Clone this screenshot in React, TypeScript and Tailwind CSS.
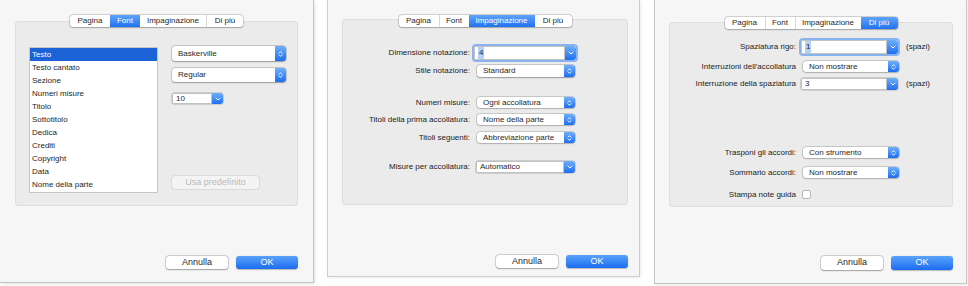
import React from "react";

const UpDown = () => (
  <svg width="5" height="8" viewBox="0 0 5 8">
    <path d="M1 3.2 L2.5 1.6 L4 3.2 M1 4.8 L2.5 6.4 L4 4.8" stroke="white" strokeWidth="0.9" fill="none" strokeLinecap="round" strokeLinejoin="round" />
  </svg>
);

const Down = () => (
  <svg width="6" height="4" viewBox="0 0 6 4">
    <path d="M1 1 L3 3 L5 1" stroke="white" strokeWidth="1" fill="none" strokeLinecap="round" strokeLinejoin="round" />
  </svg>
);

function Popup({ className, text }: { className: string; text: string }) {
  return (
    <div className={`flex items-stretch rounded-[3px] bg-white shadow-[0_0_0_0.5px_rgba(0,0,0,0.25),0_0.5px_1.5px_rgba(0,0,0,0.25)] ${className}`}>
      <div className="flex flex-1 items-center pl-[6px] text-[#1f1f1f]">{text}</div>
      <div className="flex w-[11px] items-center justify-center rounded-r-[3px] bg-gradient-to-b from-[#6eaefa] to-[#1b6ef0]">
        <UpDown />
      </div>
    </div>
  );
}

function Combo({ className, text, focus }: { className: string; text: string; focus?: boolean }) {
  return (
    <div
      className={`flex items-stretch rounded-[2px] ${
        focus ? "shadow-[0_0_0_2px_rgba(104,160,240,0.75)]" : "shadow-[0_0_0_0.5px_rgba(0,0,0,0.25)]"
      } ${className}`}
    >
      <div className="flex flex-1 items-center border border-[#c2c2c2] bg-white pl-[3px] text-[#1f1f1f]">
        {focus ? <span className="bg-[#b4d1f6] px-[1px]">{text}</span> : text}
      </div>
      <div className="flex w-[11px] items-center justify-center rounded-r-[3px] bg-gradient-to-b from-[#6eaefa] to-[#1b6ef0]">
        <Down />
      </div>
    </div>
  );
}

function Tabs({ selected }: { selected: number }) {
  const tabs = [
    { t: "Pagina", w: "w-[40px]" },
    { t: "Font", w: "w-[30px]" },
    { t: "Impaginazione", w: "w-[66px]" },
    { t: "Di più", w: "w-[37px]" },
  ];
  return (
    <div className="relative z-10 flex justify-center">
      <div className="flex h-full overflow-hidden rounded-[3px] bg-white shadow-[0_0_0_0.5px_rgba(0,0,0,0.25),0_0.5px_1.5px_rgba(0,0,0,0.2)]">
        {tabs.map((tab, i) => (
          <div
            key={tab.t}
            className={`flex items-center justify-center ${tab.w} ${
              i === selected
                ? "bg-gradient-to-b from-[#5ea3fa] to-[#1f72f0] text-white"
                : "text-[#1f1f1f]"
            } ${i > 0 && i !== selected && i - 1 !== selected ? "border-l border-[#d6d6d6]" : ""}`}
          >
            {tab.t}
          </div>
        ))}
      </div>
    </div>
  );
}

function Buttons({ className }: { className: string }) {
  return (
    <div className={`flex justify-end gap-[8px] text-[9px] ${className}`}>
      <div className="flex w-[62px] items-center justify-center rounded-[3px] bg-white text-[#1f1f1f] shadow-[0_0_0_0.5px_rgba(0,0,0,0.25),0_0.5px_1.5px_rgba(0,0,0,0.25)]">
        Annulla
      </div>
      <div className="flex w-[62px] items-center justify-center rounded-[3px] bg-gradient-to-b from-[#5aa2fa] to-[#1a6cf0] text-white shadow-[0_0.5px_1px_rgba(0,0,0,0.25)]">
        OK
      </div>
    </div>
  );
}

const listItems = [
  "Testo",
  "Testo cantato",
  "Sezione",
  "Numeri misure",
  "Titolo",
  "Sottotitolo",
  "Dedica",
  "Crediti",
  "Copyright",
  "Data",
  "Nome della parte",
];

function Row({ label, labelW, children, className }: { label: string; labelW: string; children: React.ReactNode; className: string }) {
  return (
    <div className={`flex items-stretch ${className}`}>
      <div className={`flex shrink-0 items-center justify-end text-right text-[#222] ${labelW}`}>{label}</div>
      {children}
    </div>
  );
}

export default function App() {
  return (
    <div className="flex h-[286px] w-[968px] items-start overflow-hidden bg-white text-[8px] [font-family:'Liberation_Sans',Arial,sans-serif]">
      {/* Panel 1 */}
      <div className="flex h-[283px] w-[314px] shrink-0 flex-col border-r border-b border-[#c6c6c6] bg-[#f6f6f6] px-[15px] pt-[15px] shadow-[1px_1px_3px_rgba(0,0,0,0.12)]">
        <div className="h-[12px]">
          <Tabs selected={1} />
        </div>
        <div className="-mt-[6px] flex h-[185px] rounded-[4px] bg-[#ebebeb] pl-[14px] pt-[26px] shadow-[inset_0_0_0_1px_#dedede]">
          <div className="flex h-[146px] w-[129px] shrink-0 flex-col border border-[#c6c6c6] bg-white">
            {listItems.map((t, i) => (
              <div
                key={t}
                className={`flex h-[13.2px] items-center pl-[2px] ${i === 0 ? "bg-[#1a62d6] text-white" : "text-[#1f1f1f]"}`}
              >
                {t}
              </div>
            ))}
          </div>
          <div className="-mt-[1px] ml-[14px] flex flex-col items-start">
            <Popup className="h-[15px] w-[114px]" text="Baskerville" />
            <Popup className="mt-[7px] h-[14px] w-[114px]" text="Regular" />
            <Combo className="mt-[11px] h-[11px] w-[51px]" text="10" />
            <div className="mt-[72px] flex h-[13px] w-[87px] items-center justify-center rounded-[3px] bg-[#f4f4f4] text-[9px] text-[#b9b9b9] shadow-[0_0_0_0.5px_rgba(0,0,0,0.14)]">
              Usa predefinito
            </div>
          </div>
        </div>
        <Buttons className="mt-[50px] h-[13px]" />
      </div>

      {/* Panel 2 */}
      <div className="ml-[13px] flex h-[277px] w-[313px] shrink-0 flex-col border-x border-b border-[#cdcdcd] bg-[#f6f6f6] pl-[14px] pr-[11px] pt-[15px] shadow-[1px_1px_3px_rgba(0,0,0,0.08)]">
        <div className="h-[11px]">
          <Tabs selected={2} />
        </div>
        <div className="-mt-[7px] flex h-[186px] flex-col rounded-[4px] bg-[#ebebeb] pt-[27px] shadow-[inset_0_0_0_1px_#dedede]">
          <Row label="Dimensione notazione:" labelW="w-[128px]" className="h-[14px]">
            <Combo className="ml-[4px] w-[102px]" text="4" focus />
          </Row>
          <Row label="Stile notazione:" labelW="w-[128px]" className="mt-[5px] h-[12px]">
            <Popup className="ml-[7px] w-[98px]" text="Standard" />
          </Row>
          <Row label="Numeri misure:" labelW="w-[128px]" className="mt-[20px] h-[11px]">
            <Popup className="ml-[7px] w-[98px]" text="Ogni accollatura" />
          </Row>
          <Row label="Titoli della prima accollatura:" labelW="w-[128px]" className="mt-[6px] h-[11px]">
            <Popup className="ml-[7px] w-[98px]" text="Nome della parte" />
          </Row>
          <Row label="Titoli seguenti:" labelW="w-[128px]" className="mt-[7px] h-[11px]">
            <Popup className="ml-[7px] w-[98px]" text="Abbreviazione parte" />
          </Row>
          <Row label="Misure per accollatura:" labelW="w-[128px]" className="mt-[18px] h-[12px]">
            <Combo className="ml-[6px] w-[99px]" text="Automatico" />
          </Row>
        </div>
        <Buttons className="mt-[50px] h-[13px]" />
      </div>

      {/* Panel 3 */}
      <div className="ml-[14px] flex h-[284px] w-[313px] shrink-0 flex-col border-x border-b border-[#c6c6c6] bg-[#f6f6f6] pl-[14px] pr-[13px] pt-[17px] shadow-[1px_1px_3px_rgba(0,0,0,0.1)]">
        <div className="h-[11px]">
          <Tabs selected={3} />
        </div>
        <div className="-mt-[6px] flex h-[185px] flex-col rounded-[4px] bg-[#ebebeb] pt-[18px] shadow-[inset_0_0_0_1px_#dedede]">
          <Row label="Spaziatura rigo:" labelW="w-[127px]" className="h-[14px]">
            <Combo className="ml-[5px] w-[97px]" text="1" focus />
            <div className="ml-[8px] flex items-center text-[#222]">(spazi)</div>
          </Row>
          <Row label="Interruzioni dell'accollatura" labelW="w-[127px]" className="mt-[7px] h-[11px]">
            <Popup className="ml-[7px] w-[96px]" text="Non mostrare" />
          </Row>
          <Row label="Interruzione della spaziatura" labelW="w-[127px]" className="mt-[6px] h-[12px]">
            <Combo className="ml-[5px] w-[97px]" text="3" />
            <div className="ml-[8px] flex items-center text-[#222]">(spazi)</div>
          </Row>
          <Row label="Trasponi gli accordi:" labelW="w-[127px]" className="mt-[57px] h-[11px]">
            <Popup className="ml-[7px] w-[96px]" text="Con strumento" />
          </Row>
          <Row label="Sommario accordi:" labelW="w-[127px]" className="mt-[9px] h-[11px]">
            <Popup className="ml-[7px] w-[96px]" text="Non mostrare" />
          </Row>
          <Row label="Stampa note guida" labelW="w-[127px]" className="mt-[12px] h-[9px]">
            <div className="ml-[6px] h-[9px] w-[9px] rounded-[2px] border border-[#b5b5b5] bg-white" />
          </Row>
        </div>
        <Buttons className="mt-[49px] h-[14px]" />
      </div>
    </div>
  );
}
